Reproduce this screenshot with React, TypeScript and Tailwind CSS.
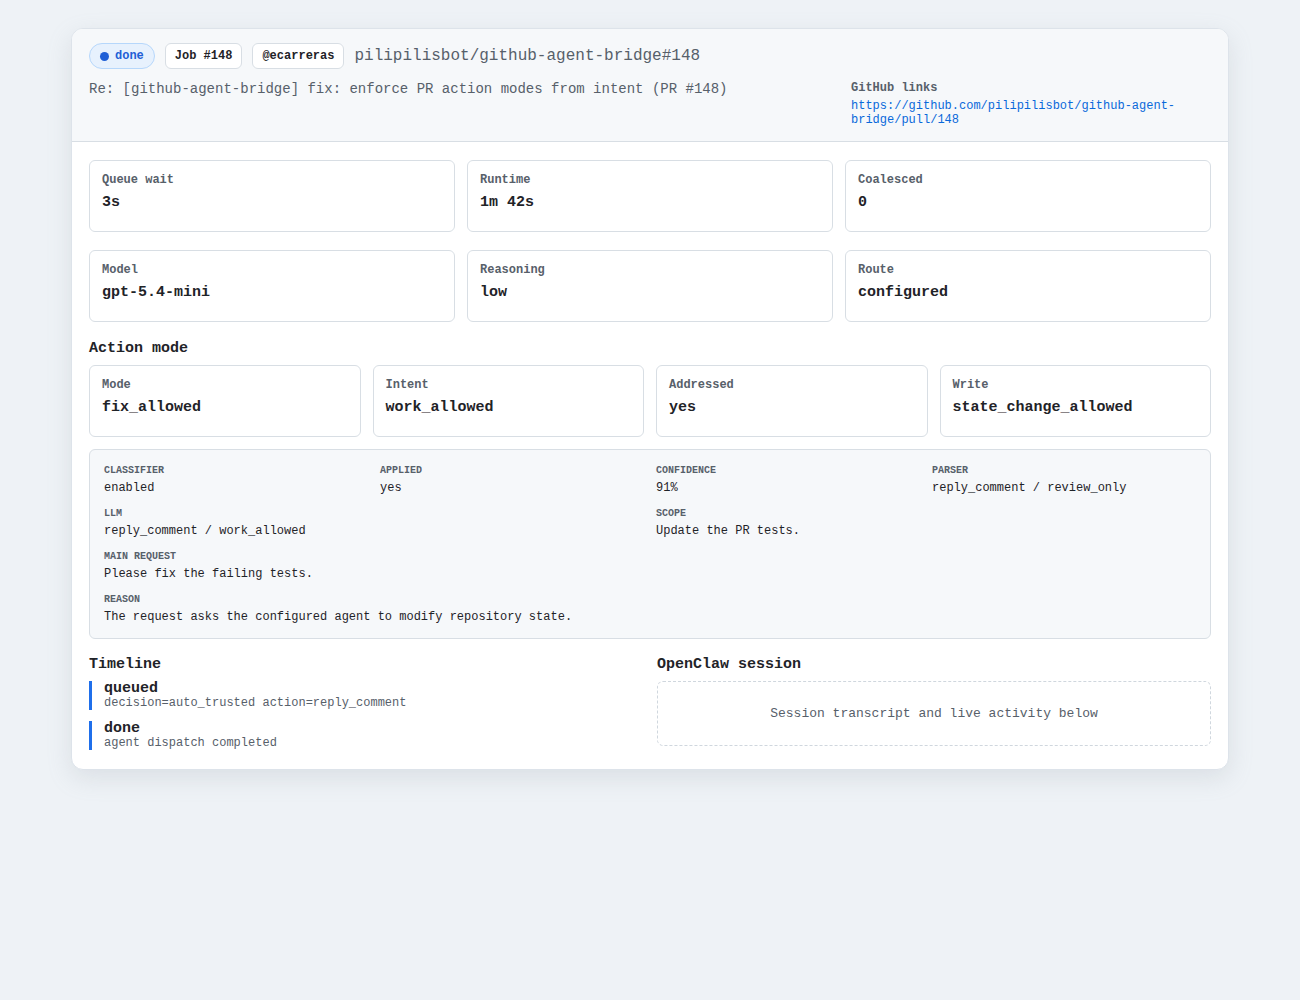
import React from "react";

const mono = "font-['Liberation_Mono',_'DejaVu_Sans_Mono',_monospace]";

function Stat({ label, value }: { label: string; value: string }) {
  return (
    <div className="rounded-[6px] border border-[#d8dee4] bg-white px-3 pt-[11px] pb-[18px]">
      <div className="text-[12px] leading-[16px] font-bold text-[#57606a]">{label}</div>
      <div className="mt-[5px] text-[15px] leading-[20px] font-bold text-[#1f2328]">{value}</div>
    </div>
  );
}

function KV({ label, value, span }: { label: string; value: string; span?: string }) {
  return (
    <div className={span}>
      <div className="text-[10px] leading-[13px] font-bold uppercase text-[#57606a]">{label}</div>
      <div className="mt-[4px] text-[12px] leading-[14px] text-[#1f2328]">{value}</div>
    </div>
  );
}

export default function App() {
  return (
    <div className={`min-h-[1000px] bg-[#eef2f6] pt-[28px] ${mono}`}>
      <div className="mx-auto w-[1158px] overflow-hidden rounded-[12px] border border-[#dde3ea] bg-white shadow-[0_8px_24px_rgba(140,149,159,0.2)]">
        <div className="flex justify-between border-b border-[#d8dee4] bg-[#f6f8fa] px-[17px] pt-[14px] pb-[14px]">
          <div className="flex flex-col">
            <div className="flex items-center gap-[10px]">
              <span className="flex h-[26px] items-center gap-[6px] rounded-full border border-[#b6d7fb] bg-[#e7f1fd] px-[10px] text-[12px] font-bold text-[#1f5fd6]">
                <span className="h-[9px] w-[9px] rounded-full bg-[#1f5fd6]" />
                done
              </span>
              <span className="flex h-[26px] items-center rounded-[6px] border border-[#d8dee4] bg-white px-[9px] text-[12px] font-bold text-[#1f2328]">
                Job #148
              </span>
              <span className="flex h-[26px] items-center rounded-[6px] border border-[#d8dee4] bg-white px-[9px] text-[12px] font-bold text-[#1f2328]">
                @ecarreras
              </span>
              <span className="text-[16px] leading-[22px] text-[#57606a]">pilipilisbot/github-agent-bridge#148</span>
            </div>
            <div className="mt-[10px] text-[14px] leading-[20px] text-[#57606a]">
              Re: [github-agent-bridge] fix: enforce PR action modes from intent (PR #148)
            </div>
          </div>
          <div className="mt-[37px] w-[360px]">
            <div className="text-[12px] leading-[16px] font-bold text-[#57606a]">GitHub links</div>
            <a className="mt-[3px] block text-[12px] leading-[14px] text-[#0969da]" href="#">
              https://github.com/pilipilisbot/github-agent-bridge/pull/148
            </a>
          </div>
        </div>

        <div className="px-[17px] pt-[18px] pb-[19px]">
          <div className="grid grid-cols-3 gap-x-[12px] gap-y-[18px]">
            <Stat label="Queue wait" value="3s" />
            <Stat label="Runtime" value="1m 42s" />
            <Stat label="Coalesced" value="0" />
            <Stat label="Model" value="gpt-5.4-mini" />
            <Stat label="Reasoning" value="low" />
            <Stat label="Route" value="configured" />
          </div>

          <div className="mt-[17px] text-[15px] leading-[20px] font-bold text-[#1f2328]">Action mode</div>
          <div className="mt-[6px] grid grid-cols-4 gap-[12px]">
            <Stat label="Mode" value="fix_allowed" />
            <Stat label="Intent" value="work_allowed" />
            <Stat label="Addressed" value="yes" />
            <Stat label="Write" value="state_change_allowed" />
          </div>

          <div className="mt-[12px] grid grid-cols-4 gap-x-[12px] gap-y-[12px] rounded-[6px] border border-[#d8dee4] bg-[#f6f8fa] px-[14px] pt-[14px] pb-[14px]">
            <KV label="Classifier" value="enabled" />
            <KV label="Applied" value="yes" />
            <KV label="Confidence" value="91%" />
            <KV label="Parser" value="reply_comment / review_only" />
            <KV label="LLM" value="reply_comment / work_allowed" span="col-span-2" />
            <KV label="Scope" value="Update the PR tests." span="col-span-2" />
            <KV label="Main request" value="Please fix the failing tests." span="col-span-4" />
            <KV label="Reason" value="The request asks the configured agent to modify repository state." span="col-span-4" />
          </div>

          <div className="mt-[16px] grid grid-cols-2 gap-[14px]">
            <div>
              <div className="text-[15px] leading-[20px] font-bold text-[#1f2328]">Timeline</div>
              <div className="mt-[6px] flex flex-col gap-[11px]">
                <div className="border-l-[3px] border-[#1f6feb] pl-[12px]">
                  <div className="text-[15px] leading-[15px] font-bold text-[#1f2328]">queued</div>
                  <div className="text-[12px] leading-[14px] text-[#57606a]">decision=auto_trusted action=reply_comment</div>
                </div>
                <div className="border-l-[3px] border-[#1f6feb] pl-[12px]">
                  <div className="text-[15px] leading-[15px] font-bold text-[#1f2328]">done</div>
                  <div className="text-[12px] leading-[14px] text-[#57606a]">agent dispatch completed</div>
                </div>
              </div>
            </div>
            <div>
              <div className="text-[15px] leading-[20px] font-bold text-[#1f2328]">OpenClaw session</div>
              <div className="mt-[6px] flex h-[65px] items-center justify-center rounded-[6px] border border-dashed border-[#d0d7de] text-[13px] text-[#57606a]">
                Session transcript and live activity below
              </div>
            </div>
          </div>
        </div>
      </div>
    </div>
  );
}
